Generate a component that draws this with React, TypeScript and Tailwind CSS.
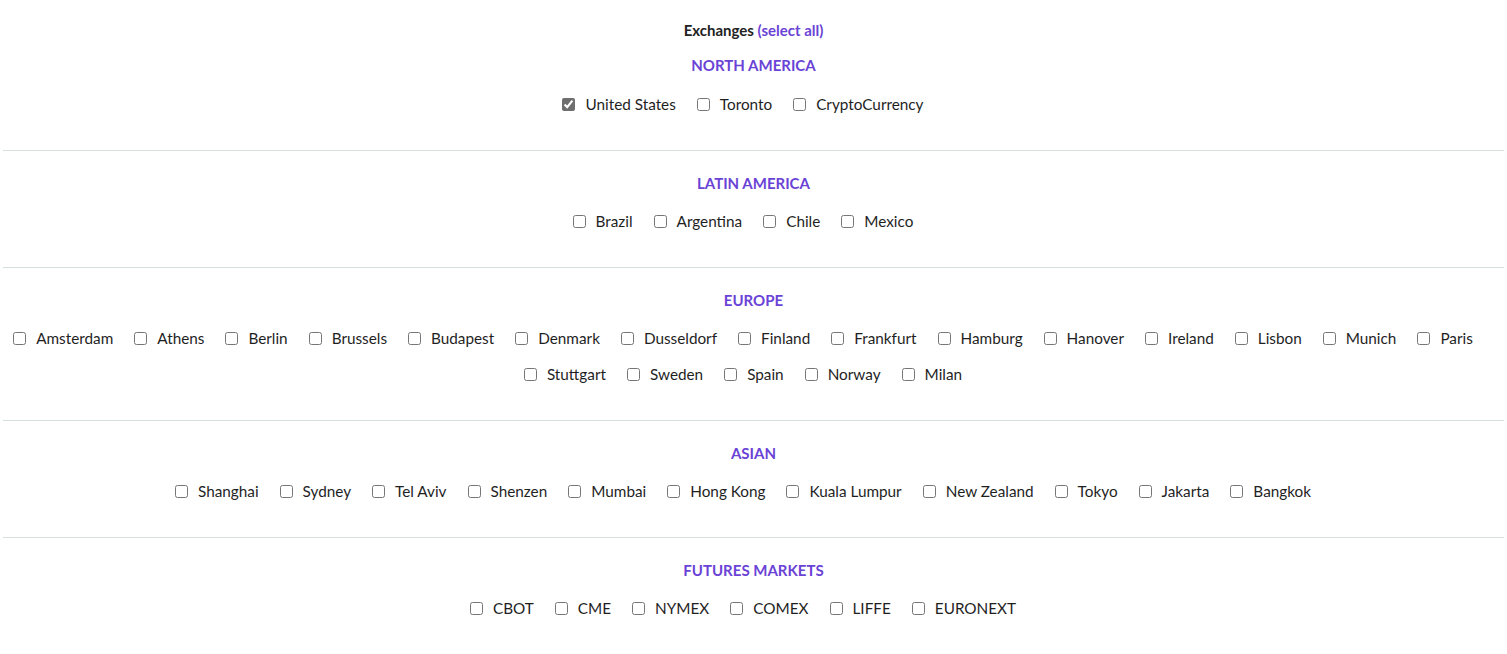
import { useState } from "react";

type Region = { title: string; markets: string[] };

const regions: Region[] = [
  { title: "North America", markets: ["United States", "Toronto", "CryptoCurrency"] },
  { title: "Latin America", markets: ["Brazil", "Argentina", "Chile", "Mexico"] },
  {
    title: "Europe",
    markets: [
      "Amsterdam", "Athens", "Berlin", "Brussels", "Budapest", "Denmark", "Dusseldorf", "Finland",
      "Frankfurt", "Hamburg", "Hanover", "Ireland", "Lisbon", "Munich", "Paris", "Stuttgart",
      "Sweden", "Spain", "Norway", "Milan",
    ],
  },
  {
    title: "Asian",
    markets: [
      "Shanghai", "Sydney", "Tel Aviv", "Shenzen", "Mumbai", "Hong Kong", "Kuala Lumpur",
      "New Zealand", "Tokyo", "Jakarta", "Bangkok",
    ],
  },
  { title: "Futures Markets", markets: ["CBOT", "CME", "NYMEX", "COMEX", "LIFFE", "EURONEXT"] },
];

export default function App() {
  const [checked, setChecked] = useState<Record<string, boolean>>({ "United States": true });

  const toggle = (name: string) => setChecked((prev) => ({ ...prev, [name]: !prev[name] }));

  const selectAll = () => {
    const all: Record<string, boolean> = {};
    regions.forEach((r) => r.markets.forEach((m) => (all[m] = true)));
    setChecked(all);
  };

  return (
    <div className="min-h-screen bg-white px-[3px] pt-[20px] text-[15.3px] text-[#1f1f1f] font-['Lato','Liberation_Sans',sans-serif]">
      <div className="text-center h-[20px] leading-[20px] font-bold text-[15px] text-[#222]">
        Exchanges{" "}
        <button onClick={selectAll} className="text-[#6a43d6] font-bold cursor-pointer">
          (select all)
        </button>
      </div>

      {regions.map((region, i) => (
        <section
          key={region.title}
          className={i === 0 ? "pt-[15px] pb-[28px]" : "border-t border-[#d5dfdc] pt-[22px] pb-[28px]"}
        >
          <h3 className="text-center h-[20px] leading-[20px] font-bold uppercase text-[15px] text-[#6a43d6]">
            {region.title}
          </h3>
          <div className={`${i === 0 ? "mt-[11px]" : "mt-[10px]"} flex flex-wrap justify-center`}>
            {region.markets.map((m) => (
              <label key={m} className="h-[36px] mr-[21px] inline-flex items-center cursor-pointer">
                <input
                  type="checkbox"
                  checked={!!checked[m]}
                  onChange={() => toggle(m)}
                  className="m-0 w-[13px] h-[13px] accent-[#6e6e6e]"
                />
                <span className="ml-[10px] leading-[22px]">{m}</span>
              </label>
            ))}
          </div>
        </section>
      ))}
    </div>
  );
}
